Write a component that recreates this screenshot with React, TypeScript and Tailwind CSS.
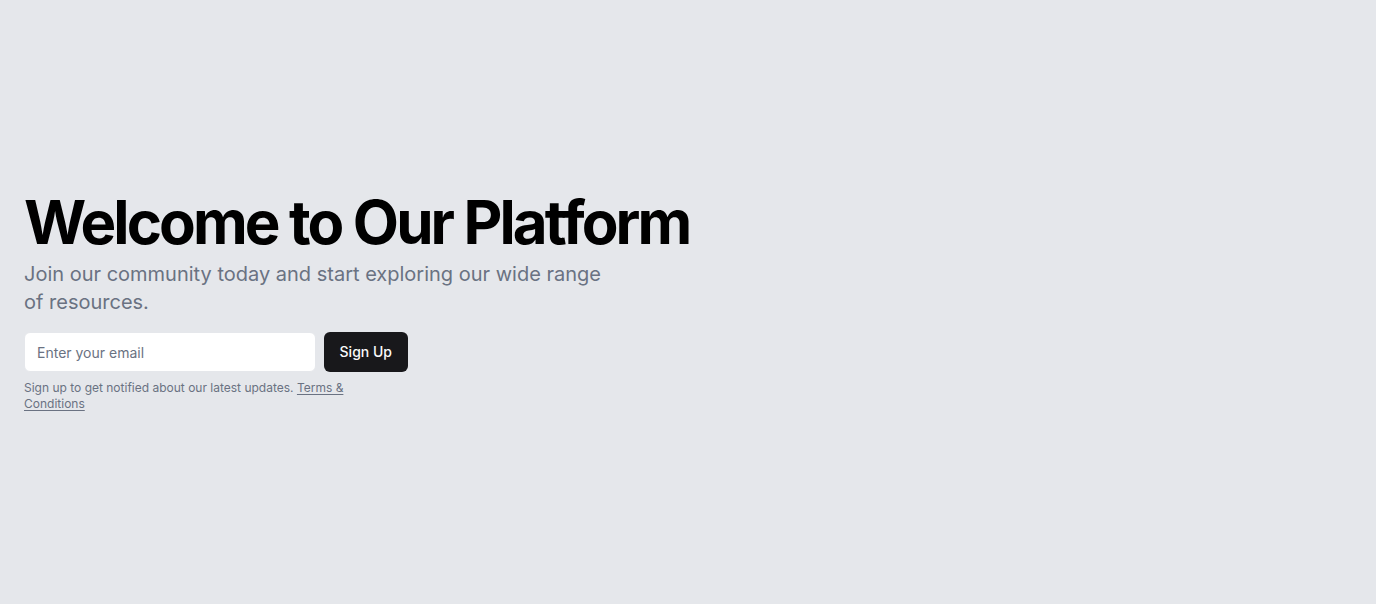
export default function App() {
  return (
    <section
      className="w-full bg-gray-200 py-48"
      style={{ fontFamily: "Inter, 'Noto Sans', sans-serif" }}
    >
      <div className="px-6">
        <div className="flex flex-col justify-center gap-4">
          <div className="flex flex-col gap-2">
            <h1 className="text-6xl/none font-bold tracking-[-0.048em] text-black">
              Welcome to Our Platform
            </h1>
            <p className="max-w-[600px] text-xl text-gray-500">
              Join our community today and start exploring our wide range of resources.
            </p>
          </div>
          <div className="flex w-full max-w-sm flex-col gap-2">
            <form className="flex gap-2" onSubmit={(e) => e.preventDefault()}>
              <input
                type="email"
                placeholder="Enter your email"
                className="h-10 min-w-0 flex-1 rounded-md border border-gray-200 bg-white px-3 py-2 text-sm text-gray-900 placeholder:text-gray-500 outline-none"
              />
              <button
                type="submit"
                className="h-10 rounded-md bg-zinc-900 px-4 text-sm font-medium text-zinc-50"
              >
                Sign Up
              </button>
            </form>
            <p className="max-w-[360px] text-xs text-gray-500">
              Sign up to get notified about our latest updates.{" "}
              <a href="#" className="underline underline-offset-2">
                Terms &amp; Conditions
              </a>
            </p>
          </div>
        </div>
      </div>
    </section>
  );
}
